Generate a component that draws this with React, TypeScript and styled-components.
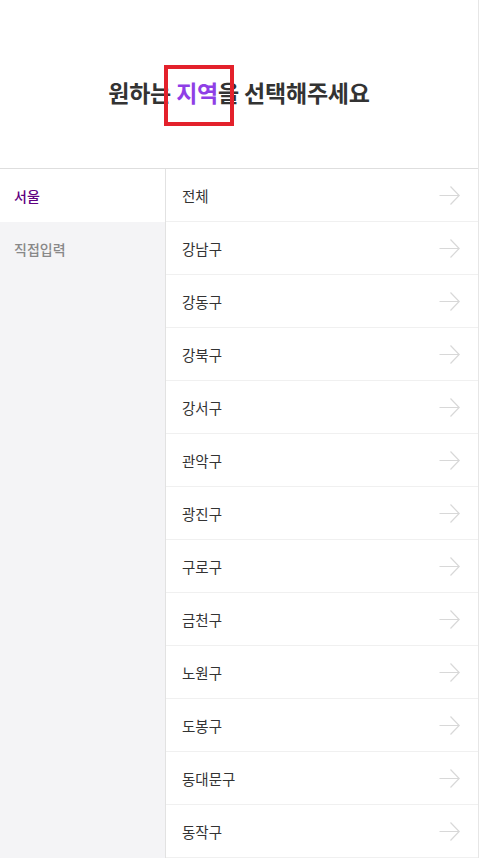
import React from "react";
import styled, { createGlobalStyle } from "styled-components";

const Global = createGlobalStyle`
  html, body { margin: 0; padding: 0; background: #fff; }
  body { font-family: "Noto Sans CJK KR", "Noto Sans", sans-serif; }
  * { box-sizing: border-box; }
`;

const Page = styled.div`
  width: 479px;
  height: 858px;
  overflow: hidden;
  border-right: 1px solid #e6e6e6;
  display: flex;
  flex-direction: column;
`;

const Header = styled.div`
  height: 169px;
  border-bottom: 1px solid #dedede;
  display: flex;
  align-items: center;
  justify-content: center;
  padding-top: 16px;
  flex-shrink: 0;
`;

const Title = styled.h1`
  margin: 0;
  font-size: 23px;
  font-weight: 700;
  color: #333;
  letter-spacing: -0.2px;
  line-height: 1;
`;

const Highlight = styled.span`
  position: relative;
  color: #8f3fe6;
`;

const Marker = styled.span`
  position: absolute;
  left: -12px;
  right: -16px;
  top: -10px;
  bottom: -17px;
  border: 4px solid #e3212b;
  pointer-events: none;
`;

const Body = styled.div`
  display: flex;
  flex: 1;
  min-height: 0;
`;

const Side = styled.div`
  width: 166px;
  background: #f4f4f6;
  border-right: 1px solid #e2e2e2;
  flex-shrink: 0;
`;

const SideItem = styled.div<{ $active?: boolean }>`
  height: 53px;
  display: flex;
  align-items: center;
  padding-left: 14px;
  font-size: 14px;
  font-weight: 500;
  background: ${(p) => (p.$active ? "#fff" : "transparent")};
  color: ${(p) => (p.$active ? "#5f0080" : "#888")};
`;

const List = styled.div`
  flex: 1;
`;

const Row = styled.div`
  height: 53px;
  display: flex;
  align-items: center;
  justify-content: space-between;
  padding: 0 18px 0 16px;
  border-bottom: 1px solid #f0f0f0;
  font-size: 14.5px;
  color: #333;
`;

const Arrow = () => (
  <svg width="21" height="21" viewBox="0 0 21 21" fill="none">
    <path d="M0.5 10.5H20M11.5 1.5L20.2 10.5L11.5 19.5" stroke="#d8d8d8" strokeWidth="1.2" />
  </svg>
);

const districts = [
  "전체",
  "강남구",
  "강동구",
  "강북구",
  "강서구",
  "관악구",
  "광진구",
  "구로구",
  "금천구",
  "노원구",
  "도봉구",
  "동대문구",
  "동작구",
];

export default function App() {
  return (
    <>
      <Global />
      <Page>
        <Header>
          <Title>
            원하는{" "}
            <Highlight>
              지역
              <Marker />
            </Highlight>
            을 선택해주세요
          </Title>
        </Header>
        <Body>
          <Side>
            <SideItem $active>서울</SideItem>
            <SideItem>직접입력</SideItem>
          </Side>
          <List>
            {districts.map((d) => (
              <Row key={d}>
                <span>{d}</span>
                <Arrow />
              </Row>
            ))}
          </List>
        </Body>
      </Page>
    </>
  );
}
